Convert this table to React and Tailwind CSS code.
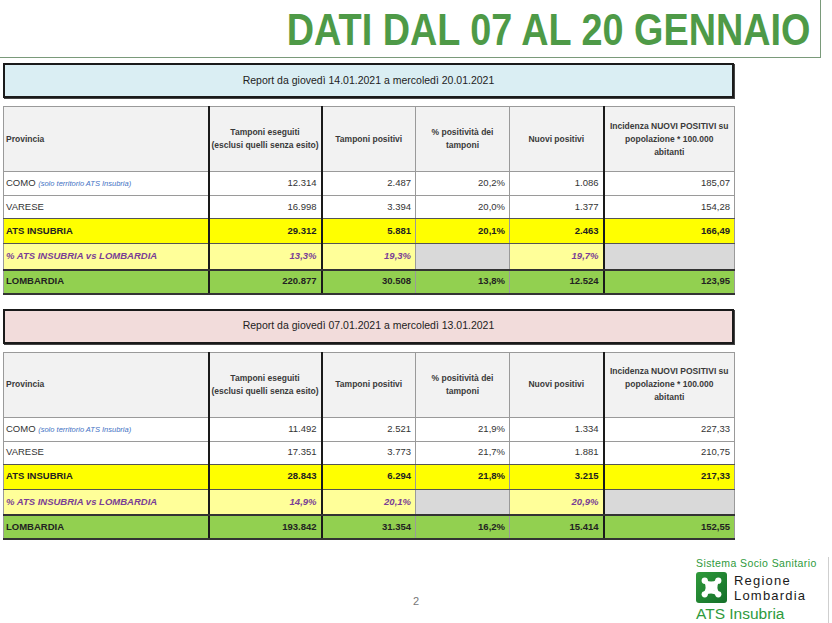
import React from 'react';

const font = "font-['Liberation_Sans',Arial,sans-serif]";

const week1 = {
  label: 'Report da giovedì 14.01.2021 a mercoledì 20.01.2021',
  banner: 'bg-[#daeef3]',
  como: ['12.314', '2.487', '20,2%', '1.086', '185,07'],
  varese: ['16.998', '3.394', '20,0%', '1.377', '154,28'],
  ats: ['29.312', '5.881', '20,1%', '2.463', '166,49'],
  perc: ['13,3%', '19,3%', null, '19,7%', null],
  lomb: ['220.877', '30.508', '13,8%', '12.524', '123,95'],
};

const week2 = {
  label: 'Report da giovedì 07.01.2021 a mercoledì 13.01.2021',
  banner: 'bg-[#f2dcdb]',
  como: ['11.492', '2.521', '21,9%', '1.334', '227,33'],
  varese: ['17.351', '3.773', '21,7%', '1.881', '210,75'],
  ats: ['28.843', '6.294', '21,8%', '3.215', '217,33'],
  perc: ['14,9%', '20,1%', null, '20,9%', null],
  lomb: ['193.842', '31.354', '16,2%', '15.414', '152,55'],
};

// bordi verticali: scuri tra le prime colonne e prima dell'incidenza
const vline = [
  'border-r-2 border-r-[#1a1a1a]',
  'border-r-2 border-r-[#1a1a1a]',
  'border-r border-r-[#9a9a9a]',
  'border-r border-r-[#9a9a9a]',
  'border-r-2 border-r-[#1a1a1a]',
  '',
];

function Banner({ text, bg }) {
  return (
    <div
      className={`ml-[3px] w-[731px] h-[35px] ${bg} border-2 border-[#1a1a1a] shadow-[1px_1px_0_#444] flex items-center justify-center text-[10.5px] text-[#222]`}
    >
      {text}
    </div>
  );
}

function Row({ label, values, rowClass, textClass, height, perc = false, borderB }) {
  return (
    <tr className={`${rowClass} ${height}`}>
      <td className={`${vline[0]} ${borderB} px-[2px] text-left ${textClass}`}>{label}</td>
      {values.map((v, i) => (
        <td
          key={i}
          className={`${vline[i + 1]} ${borderB} pr-[4px] text-right ${textClass} ${
            v === null ? 'bg-[#d9d9d9]' : perc ? 'bg-[#ffff99]' : ''
          }`}
        >
          {v}
        </td>
      ))}
    </tr>
  );
}

function ReportTable({ data }) {
  const th = 'font-bold text-[8.5px] leading-[13px] text-[#3a3a3a] align-middle';
  return (
    <table className="ml-[3px] w-[731px] table-fixed border-collapse border border-[#9a9a9a] text-[9.5px] text-[#333]">
      <colgroup>
        <col className="w-[205px]" />
        <col className="w-[113px]" />
        <col className="w-[94px]" />
        <col className="w-[94px]" />
        <col className="w-[94px]" />
        <col className="w-[131px]" />
      </colgroup>
      <thead>
        <tr className="h-[65px] bg-[#f2f2f2]">
          <th className={`${vline[0]} border-b border-b-[#9a9a9a] px-[2px] text-left ${th}`}>Provincia</th>
          <th className={`${vline[1]} border-b border-b-[#9a9a9a] text-center ${th}`}>
            Tamponi eseguiti
            <br />
            (esclusi quelli senza esito)
          </th>
          <th className={`${vline[2]} border-b border-b-[#9a9a9a] text-center ${th}`}>Tamponi positivi</th>
          <th className={`${vline[3]} border-b border-b-[#9a9a9a] text-center ${th}`}>
            % positività dei
            <br />
            tamponi
          </th>
          <th className={`${vline[4]} border-b border-b-[#9a9a9a] text-center ${th}`}>Nuovi positivi</th>
          <th className={`border-b border-b-[#9a9a9a] px-[2px] text-center ${th}`}>
            Incidenza NUOVI POSITIVI su
            <br />
            popolazione * 100.000
            <br />
            abitanti
          </th>
        </tr>
      </thead>
      <tbody>
        <Row
          label={
            <>
              COMO <span className="italic text-[7.5px] text-[#4472c4]">(solo territorio ATS Insubria)</span>
            </>
          }
          values={data.como}
          rowClass="bg-white"
          textClass=""
          height="h-[24px]"
          borderB="border-b border-b-[#9a9a9a]"
        />
        <Row
          label="VARESE"
          values={data.varese}
          rowClass="bg-white"
          textClass=""
          height="h-[23px]"
          borderB="border-b border-b-[#555]"
        />
        <Row
          label="ATS INSUBRIA"
          values={data.ats}
          rowClass="bg-[#ffff00]"
          textClass="font-bold text-[#222]"
          height="h-[25px]"
          borderB="border-b border-b-[#555]"
        />
        <Row
          label="% ATS INSUBRIA vs LOMBARDIA"
          values={data.perc}
          rowClass="bg-[#ffff99]"
          textClass="font-bold italic text-[#7a3e96]"
          height="h-[26px]"
          perc
          borderB="border-b-2 border-b-[#333]"
        />
        <Row
          label="LOMBARDIA"
          values={data.lomb}
          rowClass="bg-[#92d050]"
          textClass="font-bold text-[#222]"
          height="h-[24px]"
          borderB="border-b-2 border-b-[#333]"
        />
      </tbody>
    </table>
  );
}

function RoseMark() {
  return (
    <div className="w-[31px] h-[31px] shrink-0 rounded-[3px] bg-gradient-to-br from-[#2f9a3a] to-[#14702a] flex items-center justify-center">
      <svg width="25" height="25" viewBox="0 0 24 24">
        <g fill="none" stroke="white" strokeLinecap="round" strokeWidth="3.6">
          <path d="M6 6.5 Q12 10 18 6" />
          <path d="M6 17.5 Q12 14 18 18" />
          <path d="M6.5 6 Q10 12 6 18" />
          <path d="M17.5 6 Q14 12 18 18" />
        </g>
        <g fill="white">
          <circle cx="5.5" cy="5.5" r="3" />
          <circle cx="18.5" cy="5.5" r="3" />
          <circle cx="5.5" cy="18.5" r="3" />
          <circle cx="18.5" cy="18.5" r="3" />
          <circle cx="12" cy="12" r="3.5" />
        </g>
      </svg>
    </div>
  );
}

export default function App() {
  return (
    <div className={`w-[832px] h-[623px] overflow-hidden bg-white ${font}`}>
      {/* titolo */}
      <div className="w-[821px] h-[58px] border-r border-b border-[#7a9a7a] flex items-center justify-end pr-[10px] pt-[2px]">
        <h1 className="font-bold text-[45px] leading-none text-[#4e9a47] whitespace-nowrap origin-right scale-x-[0.84]">
          DATI DAL 07 AL 20 GENNAIO
        </h1>
      </div>

      <div className="mt-[5px]">
        <Banner text={week1.label} bg={week1.banner} />
      </div>
      <div className="mt-[8px]">
        <ReportTable data={week1} />
      </div>

      <div className="mt-[14px]">
        <Banner text={week2.label} bg={week2.banner} />
      </div>
      <div className="mt-[8px]">
        <ReportTable data={week2} />
      </div>

      {/* piè di pagina */}
      <div className="flex mt-[13px] h-[73px]">
        <div className="flex-1" />
        <div className="pt-[40px] text-[11px] text-[#777]">2</div>
        <div className="flex-1 flex justify-end">
          <div className="pt-[4px] w-[126px] mr-[6px]">
            <div className="text-[10.5px] tracking-[0.4px] leading-[12px] text-[#2e9a3c] whitespace-nowrap">
              Sistema Socio Sanitario
            </div>
            <div className="flex items-center gap-[7px] mt-[3px]">
              <RoseMark />
              <div className="text-[13px] leading-[15px] tracking-[1.2px] text-[#1a1a1a]">
                <div>Regione</div>
                <div>Lombardia</div>
              </div>
            </div>
            <div className="mt-[2px] text-[15.5px] leading-[17px] text-[#2e9a3c]">ATS Insubria</div>
          </div>
          <div className="w-px bg-[#cfcfcf] mt-[4px]" />
          <div className="w-[3px]" />
        </div>
      </div>
    </div>
  );
}
